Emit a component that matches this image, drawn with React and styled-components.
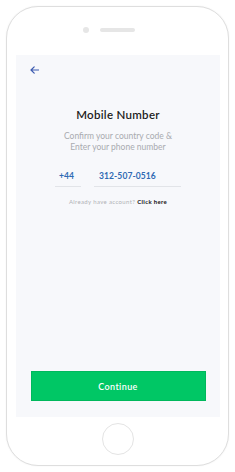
import React from "react";
import styled, { createGlobalStyle } from "styled-components";

const Global = createGlobalStyle`
  html, body { margin: 0; padding: 0; background: #ffffff; }
  body { font-family: "Lato", "Noto Sans", sans-serif; }
  * { box-sizing: border-box; }
`;

const Page = styled.div`
  width: 235px;
  height: 472px;
  padding: 6px 0 0 6px;
`;

const Phone = styled.div`
  width: 223px;
  height: 460px;
  border: 1px solid #dedede;
  border-radius: 32px;
  box-shadow: 0 0 2px rgba(0, 0, 0, 0.06);
  background: #fff;
  display: flex;
  flex-direction: column;
  align-items: center;
`;

const TopBezel = styled.div`
  height: 48px;
  width: 100%;
  display: flex;
  align-items: flex-start;
  justify-content: center;
  padding-top: 20px;
  gap: 11px;
`;

const Camera = styled.div`
  width: 6px;
  height: 6px;
  border-radius: 50%;
  background: ${(p) => (p.$ghost ? "transparent" : "#e6e6e6")};
`;

const Speaker = styled.div`
  width: 35px;
  height: 4px;
  margin-top: 1px;
  border-radius: 2px;
  background: #e6e6e6;
`;

const Screen = styled.div`
  width: 204px;
  height: 362px;
  background: #f7f8fb;
  display: flex;
  flex-direction: column;
  padding: 11px 14px 16px 15px;
`;

const BackButton = styled.button`
  border: 0;
  background: none;
  padding: 0;
  margin: 0 0 0 -2px;
  width: 12px;
  height: 8px;
  display: flex;
  align-items: center;
  justify-content: center;
  cursor: pointer;
`;

const Title = styled.h1`
  margin: 34px 0 0;
  font-size: 11.5px;
  line-height: 14px;
  font-weight: 600;
  letter-spacing: 0.3px;
  color: #1c1c1c;
  text-align: center;
`;

const Subtitle = styled.p`
  margin: 9px 0 0;
  font-size: 8.5px;
  line-height: 11px;
  letter-spacing: 0;
  color: #a9abb0;
  text-align: center;
`;

const InputRow = styled.div`
  margin-top: 18px;
  display: flex;
  justify-content: center;
  gap: 13px;
`;

const Field = styled.div`
  width: ${(p) => p.$w}px;
  border-bottom: 1px solid #e2e4e8;
  padding: 0 0 4px ${(p) => p.$pad}px;
  font-size: 8.5px;
  line-height: 11px;
  font-weight: 700;
  letter-spacing: 0.1px;
  color: #2f6ab3;
`;

const Hint = styled.p`
  margin: 11px 0 0;
  text-align: center;
  font-size: 6px;
  line-height: 8px;
  color: #b0b2b6;
  letter-spacing: 0.35px;
`;

const HintLink = styled.a`
  color: #111;
  font-weight: 700;
  text-decoration: none;
`;

const Spacer = styled.div`
  flex: 1;
`;

const ContinueButton = styled.button`
  width: 175px;
  height: 30px;
  border: 1px solid #00b85c;
  background: #00c765;
  color: #fff;
  font-family: "Lato", "Noto Sans", sans-serif;
  font-size: 9px;
  font-weight: 600;
  letter-spacing: 0.4px;
  padding: 0;
  cursor: pointer;
`;

const BottomBezel = styled.div`
  flex: 1;
  width: 100%;
  display: flex;
  align-items: flex-start;
  justify-content: center;
  padding-top: 6px;
`;

const HomeButton = styled.div`
  width: 32px;
  height: 32px;
  border-radius: 50%;
  border: 1.5px solid #e4e4e4;
`;

export default function App() {
  return (
    <>
      <Global />
      <Page>
        <Phone>
          <TopBezel>
            <Camera />
            <Speaker />
            <Camera $ghost />
          </TopBezel>
          <Screen>
            <BackButton aria-label="Back">
              <svg width="9" height="8" viewBox="0 0 9 8" fill="none">
                <path
                  d="M8.5 4H1M4.2 0.8L1 4L4.2 7.2"
                  stroke="#3d5bb0"
                  strokeWidth="1.2"
                  strokeLinecap="round"
                  strokeLinejoin="round"
                />
              </svg>
            </BackButton>
            <Title>Mobile Number</Title>
            <Subtitle>
              Confirm your country code &amp;
              <br />
              Enter your phone number
            </Subtitle>
            <InputRow>
              <Field $w={26} $pad={4}>+44</Field>
              <Field $w={87} $pad={5}>312-507-0516</Field>
            </InputRow>
            <Hint>
              Already have account? <HintLink href="#">Click here</HintLink>
            </Hint>
            <Spacer />
            <ContinueButton>Continue</ContinueButton>
          </Screen>
          <BottomBezel>
            <HomeButton />
          </BottomBezel>
        </Phone>
      </Page>
    </>
  );
}
